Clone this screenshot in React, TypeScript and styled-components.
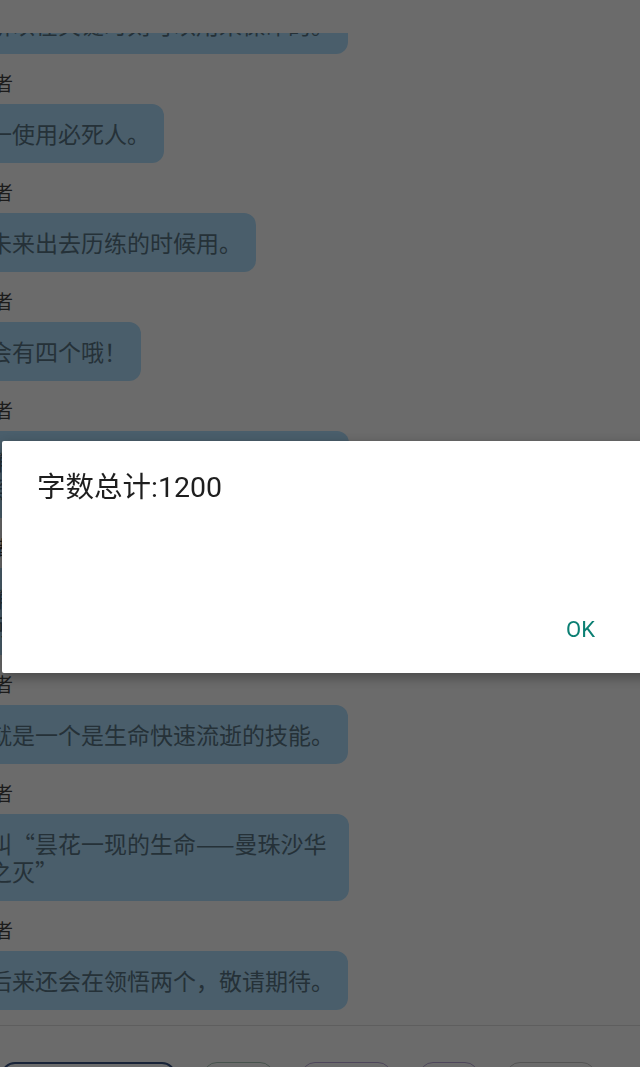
import React from 'react'
import styled, { createGlobalStyle } from 'styled-components'

const GlobalStyle = createGlobalStyle`
  html, body {
    margin: 0;
    padding: 0;
    height: 100%;
    overflow: hidden;
    background: #ffffff;
  }
  body {
    font-family: Roboto, "Noto Sans CJK SC", sans-serif;
  }
`

const Screen = styled.div`
  height: 100vh;
  display: flex;
  flex-direction: column;
  background: #ffffff;
  overflow: hidden;
`

const TopBar = styled.div`
  flex: none;
  height: 33px;
  background: #ffffff;
`

// the chat is scrolled: its first message sits partly under the top bar
const ListViewport = styled.div`
  flex: none;
  height: 992px;
  overflow: hidden;
  border-bottom: 1px solid #e0e0e0;
`

const MessageList = styled.div`
  display: flex;
  flex-direction: column;
  gap: 20px;
  margin: -68px 0 0 -25px;
`

const Message = styled.div`
  display: flex;
  flex-direction: column;
  gap: 8px;
`

const Sender = styled.div`
  font-size: 19px;
  line-height: 22px;
  color: #444444;
`

const Bubble = styled.div`
  align-self: flex-start;
  box-sizing: border-box;
  max-width: 374px;
  padding: 15px 14px 16px;
  background: #b0e0ff;
  border-radius: 12px;
  font-family: "Noto Sans CJK SC", sans-serif;
  font-size: 23px;
  line-height: 28px;
  color: #5a7686;
`

const ChipRow = styled.div`
  flex: none;
  display: flex;
  gap: 27px;
  padding: 36px 0 0 1px;
`

const Chip = styled.div<{ $width: number; $color: string; $thick?: boolean }>`
  flex: none;
  box-sizing: border-box;
  width: ${p => p.$width}px;
  height: 44px;
  border: ${p => (p.$thick ? 2 : 1.5)}px solid ${p => p.$color};
  border-radius: 14px;
`

const Overlay = styled.div`
  position: fixed;
  inset: 0;
  z-index: 10;
  background: rgba(0, 0, 0, 0.58);
  padding: 441px 0 0 2px;
`

const Dialog = styled.div`
  width: 680px;
  height: 232px;
  display: flex;
  flex-direction: column;
  background: #ffffff;
  border-radius: 2px;
  box-shadow: 0 4px 14px rgba(0, 0, 0, 0.35);
`

const DialogTitle = styled.div`
  padding: 29px 0 0 35px;
  font-size: 28.5px;
  line-height: 36px;
  color: #1e1e1e;
`

const DialogActions = styled.div`
  margin-top: auto;
  display: flex;
  justify-content: flex-end;
  padding: 0 79px 25px 0;
`

const OkButton = styled.button`
  height: 36px;
  padding: 0 8px;
  border: none;
  background: none;
  font-family: Roboto, sans-serif;
  font-size: 22px;
  line-height: 36px;
  color: #0b7f73;
`

const messages = [
  '所以在关键时刻可以用来保命的。',
  '一使用必死人。',
  '未来出去历练的时候用。',
  '会有四个哦！',
  '第二个技能叫“死神的凝视”，被凝视的人三秒内会失去力气。',
  '第三个技能我还没有想好名字，它可以让敌人陷入幻境之中。',
  '就是一个是生命快速流逝的技能。',
  '叫“昙花一现的生命——曼珠沙华之灭”',
  '后来还会在领悟两个，敬请期待。',
]

const chips = [
  { width: 175, color: '#3a5585', thick: true },
  { width: 71, color: '#aac6ba' },
  { width: 91, color: '#b9a8d8' },
  { width: 60, color: '#b9a8d8' },
  { width: 90, color: '#c8c8c8' },
]

export default function App() {
  return (
    <>
      <GlobalStyle />
      <Screen>
        <TopBar />
        <ListViewport>
          <MessageList>
            {messages.map((text, i) => (
              <Message key={i}>
                <Sender>作者</Sender>
                <Bubble>{text}</Bubble>
              </Message>
            ))}
          </MessageList>
        </ListViewport>
        <ChipRow>
          {chips.map((c, i) => (
            <Chip key={i} $width={c.width} $color={c.color} $thick={c.thick} />
          ))}
        </ChipRow>
      </Screen>
      <Overlay>
        <Dialog>
          <DialogTitle>字数总计:1200</DialogTitle>
          <DialogActions>
            <OkButton>OK</OkButton>
          </DialogActions>
        </Dialog>
      </Overlay>
    </>
  )
}
